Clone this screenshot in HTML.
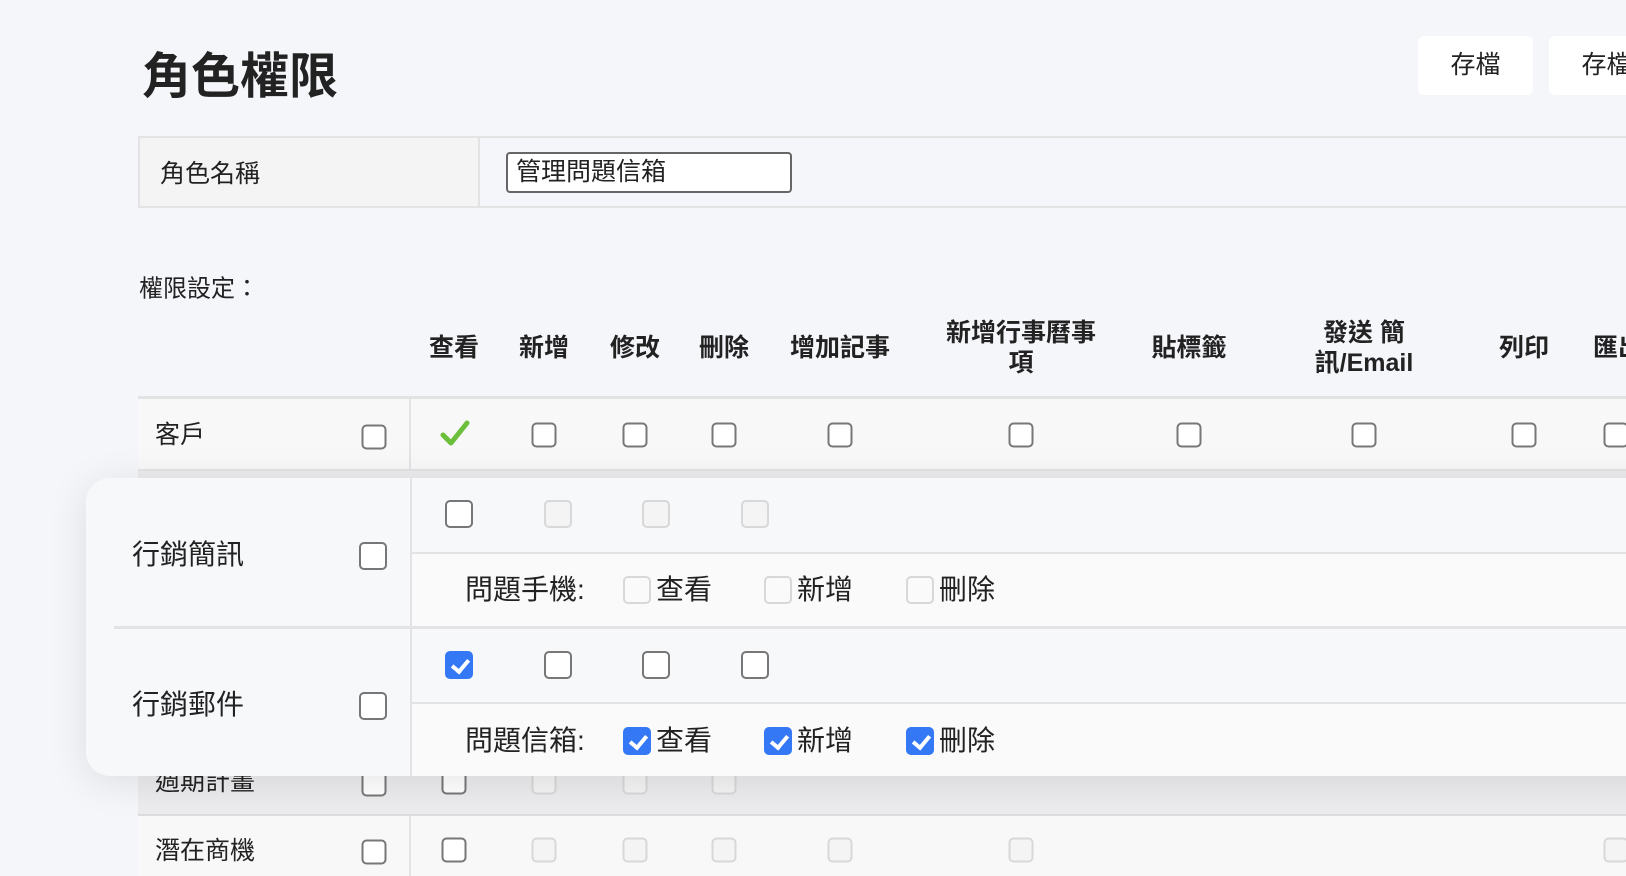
<!DOCTYPE html>
<html><head><meta charset="utf-8"><style>
*{box-sizing:border-box;margin:0;padding:0}
body{width:1626px;height:874px;overflow:hidden;background:#f5f6fa;font-family:"Liberation Sans","Noto Sans CJK TC",sans-serif;color:#222;position:relative}
.a{position:absolute}
.cb{position:absolute;width:25px;height:25px;border:2px solid #777;border-radius:5px;background:#fff;transform:translate(-50%,-50%)}
.cb.f{border-color:#d8d8d8;background:#f4f4f4}
.cb.L{width:28px;height:28px}
.cb.on{background:#3478f6;border-color:#3478f6}
.cb.on::after{content:"";position:absolute;left:8px;top:3px;width:7px;height:13px;border:solid #fff;border-width:0 4px 4px 0;transform:rotate(40deg)}
.h{position:absolute;font-weight:bold;font-size:25px;text-align:center;transform:translate(-50%,-50%);line-height:30px;white-space:nowrap}
.t{position:absolute;font-size:25px;transform:translateY(-50%);white-space:nowrap}
.k{font-size:28px}
.ln{position:absolute;background:#e3e3e5}
</style></head><body>
<div class="a" style="left:142px;top:47px;font-size:49px;font-weight:bold;line-height:60px">角色權限</div>
<div class="a" style="left:1418px;top:36px;width:115px;height:59px;background:#fff;border-radius:6px;font-size:25px;line-height:59px;text-align:center">存檔</div>
<div class="a" style="left:1549px;top:36px;width:115px;height:59px;background:#fff;border-radius:6px;font-size:25px;line-height:59px;text-align:center">存檔</div>

<div class="a" style="left:138px;top:136px;width:1500px;height:72px;border:2px solid #e3e3e3;border-right:none"></div>
<div class="a" style="left:140px;top:138px;width:340px;height:68px;background:#f4f4f4;border-right:2px solid #e3e3e3"></div>
<div class="t" style="left:160px;top:172px">角色名稱</div>
<div class="a" style="left:506px;top:152px;width:286px;height:41px;border:2px solid #666;border-radius:4px;background:#fff;font-size:25px;line-height:37px;padding-left:8px">管理問題信箱</div>

<div class="t" style="left:139px;top:286px;font-size:24px">權限設定：</div>

<div class="h" style="left:454px;top:348px">查看</div>
<div class="h" style="left:544px;top:348px">新增</div>
<div class="h" style="left:635px;top:348px">修改</div>
<div class="h" style="left:724px;top:348px">刪除</div>
<div class="h" style="left:840px;top:348px">增加記事</div>
<div class="h" style="left:1021px;top:348px">新增行事曆事<br>項</div>
<div class="h" style="left:1189px;top:348px">貼標籤</div>
<div class="h" style="left:1364px;top:348px">發送 簡<br>訊/Email</div>
<div class="h" style="left:1524px;top:348px">列印</div>
<div class="h" style="left:1618px;top:348px">匯出</div>
<div class="ln" style="left:138px;top:396px;width:1500px;height:3px"></div>

<div class="a" style="left:138px;top:399px;width:1500px;height:70px;background:#f8f8f9"></div>
<div class="ln" style="left:409px;top:399px;width:2px;height:475px"></div>
<div class="t" style="left:155px;top:433px">客戶</div>
<div class="cb" style="left:374px;top:437px"></div>
<svg class="a" style="left:440px;top:420px" width="30" height="28" viewBox="0 0 30 28"><path d="M3 15 L11 23 L27 3" stroke="#6cbf3a" stroke-width="5" fill="none" stroke-linecap="round" stroke-linejoin="round"/></svg>
<div class="cb" style="left:544px;top:435px"></div><div class="cb" style="left:635px;top:435px"></div><div class="cb" style="left:724px;top:435px"></div><div class="cb" style="left:840px;top:435px"></div><div class="cb" style="left:1021px;top:435px"></div><div class="cb" style="left:1189px;top:435px"></div><div class="cb" style="left:1364px;top:435px"></div><div class="cb" style="left:1524px;top:435px"></div><div class="cb" style="left:1616px;top:435px"></div>
<div class="ln" style="left:138px;top:469px;width:1500px;height:2px"></div>

<div class="a" style="left:138px;top:471px;width:1500px;height:344px;background:#ececef"></div>
<div class="t" style="left:155px;top:780px">週期計畫</div>
<div class="cb" style="left:374px;top:784px"></div>
<div class="cb" style="left:454px;top:782px"></div><div class="cb f" style="left:544px;top:782px"></div><div class="cb f" style="left:635px;top:782px"></div><div class="cb f" style="left:724px;top:782px"></div>
<div class="ln" style="left:138px;top:814px;width:1500px;height:2px;background:#dcdcdf"></div>
<div class="a" style="left:138px;top:816px;width:1500px;height:60px;background:#f8f8f9"></div>
<div class="ln" style="left:409px;top:816px;width:2px;height:60px"></div>
<div class="t" style="left:155px;top:849px">潛在商機</div>
<div class="cb" style="left:374px;top:852px"></div>
<div class="cb" style="left:454px;top:850px"></div><div class="cb f" style="left:544px;top:850px"></div><div class="cb f" style="left:635px;top:850px"></div><div class="cb f" style="left:724px;top:850px"></div><div class="cb f" style="left:840px;top:850px"></div><div class="cb f" style="left:1021px;top:850px"></div><div class="cb f" style="left:1616px;top:850px"></div>

<div class="a" style="left:86px;top:478px;width:1600px;height:298px;background:#f7f8fa;border-radius:24px;box-shadow:0 6px 40px rgba(0,0,0,0.10);overflow:hidden">
  <div class="a" style="left:325px;top:75px;width:1300px;height:74px;background:#fafafa"></div>
  <div class="a" style="left:325px;top:225px;width:1300px;height:73px;background:#fafafa"></div>
  <div class="ln" style="left:324px;top:0;width:2px;height:298px"></div>
  <div class="ln" style="left:28px;top:148px;width:1600px;height:3px"></div>
  <div class="ln" style="left:326px;top:74px;width:1300px;height:2px"></div>
  <div class="ln" style="left:326px;top:224px;width:1300px;height:2px"></div>
</div>
<div class="t k" style="left:132px;top:553px">行銷簡訊</div>
<div class="cb L" style="left:373px;top:556px"></div>
<div class="cb L" style="left:459px;top:514px"></div><div class="cb L f" style="left:558px;top:514px"></div><div class="cb L f" style="left:656px;top:514px"></div><div class="cb L f" style="left:755px;top:514px"></div>
<div class="t k" style="left:465px;top:588px">問題手機:</div>
<div class="cb L f" style="left:637px;top:590px;background:#fafafa"></div><div class="t k" style="left:656px;top:588px">查看</div>
<div class="cb L f" style="left:778px;top:590px;background:#fafafa"></div><div class="t k" style="left:797px;top:588px">新增</div>
<div class="cb L f" style="left:920px;top:590px;background:#fafafa"></div><div class="t k" style="left:939px;top:588px">刪除</div>

<div class="t k" style="left:132px;top:703px">行銷郵件</div>
<div class="cb L" style="left:373px;top:706px"></div>
<div class="cb L on" style="left:459px;top:665px"></div><div class="cb L" style="left:558px;top:665px"></div><div class="cb L" style="left:656px;top:665px"></div><div class="cb L" style="left:755px;top:665px"></div>
<div class="t k" style="left:465px;top:739px">問題信箱:</div>
<div class="cb L on" style="left:637px;top:741px"></div><div class="t k" style="left:656px;top:739px">查看</div>
<div class="cb L on" style="left:778px;top:741px"></div><div class="t k" style="left:797px;top:739px">新增</div>
<div class="cb L on" style="left:920px;top:741px"></div><div class="t k" style="left:939px;top:739px">刪除</div>
</body></html>
